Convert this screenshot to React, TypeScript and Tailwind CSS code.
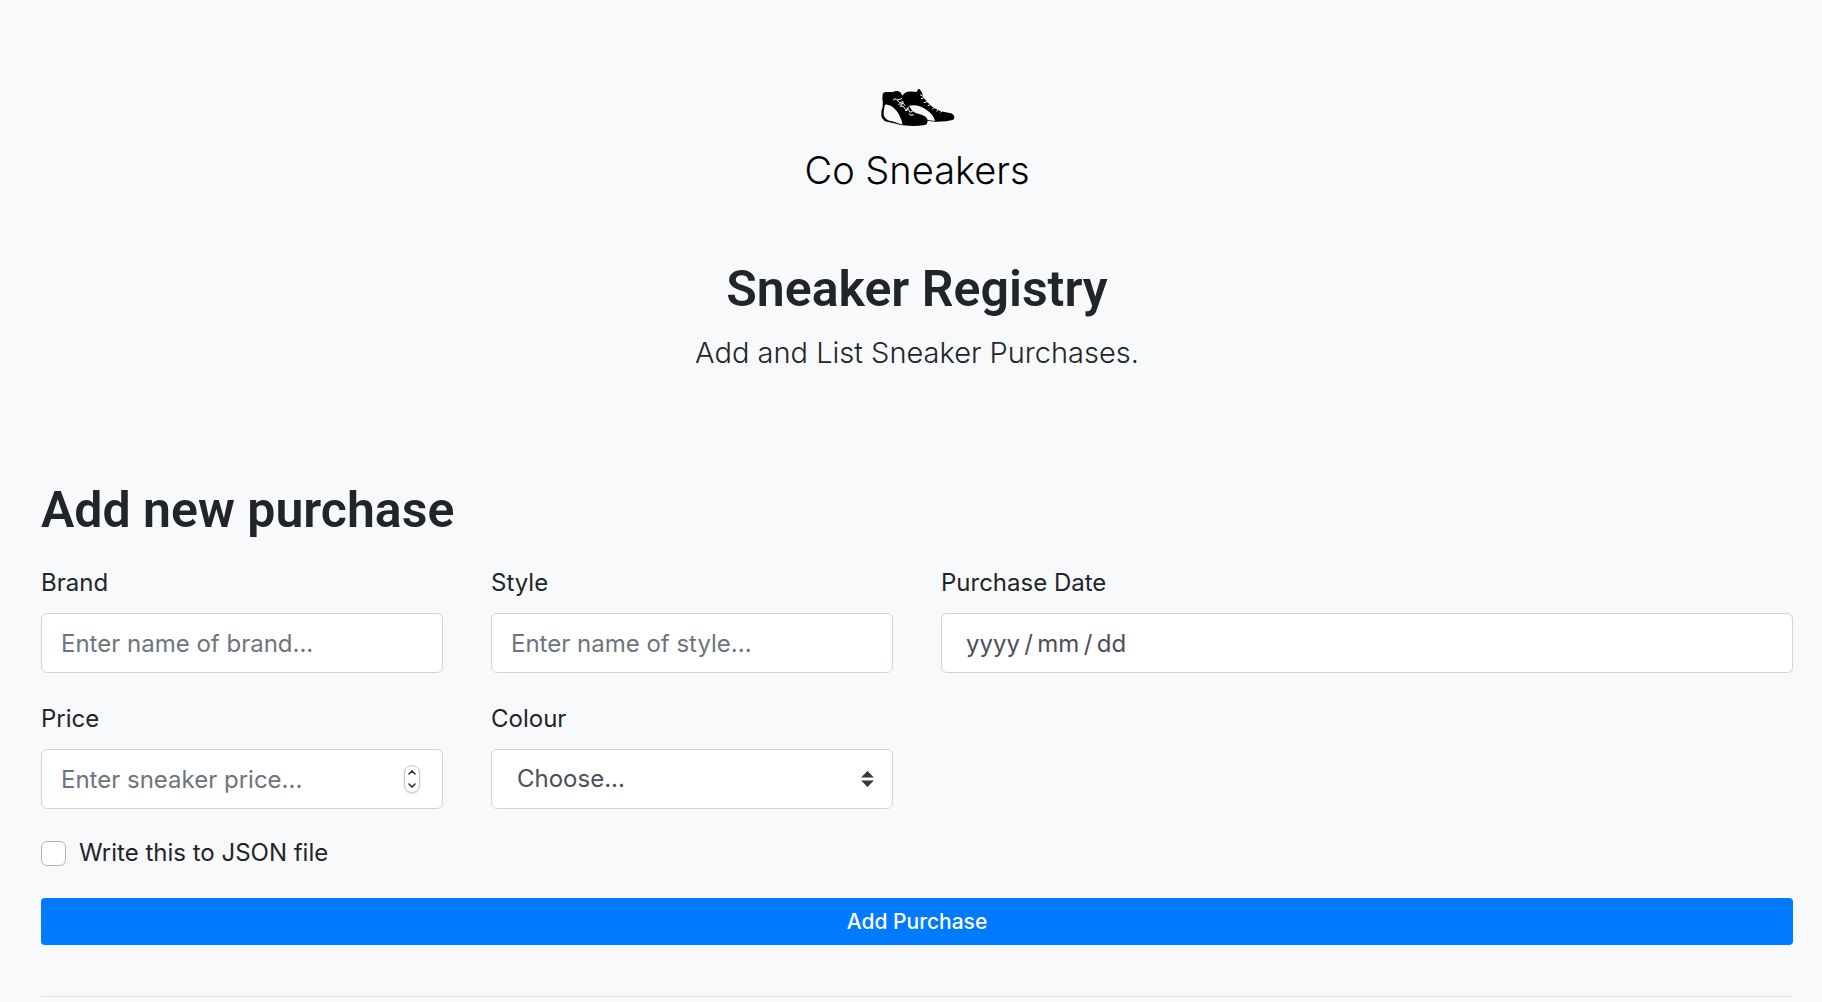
import { useState } from "react";

const control =
  "block h-[60px] w-full rounded-md border border-[#ced4da] bg-white px-[19px] text-2xl text-[#495057] placeholder:text-[#6c757d] placeholder:opacity-100 focus:border-[#80bdff] focus:outline-none";
const label = "mb-3 block text-2xl leading-9";

function SneakersLogo() {
  return (
    <svg viewBox="52 38 240 120" className="h-10 w-20" role="img" aria-label="Pair of sneakers">
      <path
        d="M126 64 Q134 51 144 49 Q158 47 171 50 L175 42 L180 41 L187 52 L191 66 L203 81 L218 94 L236 105 L251 109 L274 114 Q284 118 284 126 Q284 132 279 134 Q258 140 226 139 L203 136 L150 120 Z"
        fill="#000"
      />
      <path
        d="M69 56 Q71 51 77 50 L99 50 Q108 46 114 47 Q124 49 127 58 L136 78 L148 98 L161 114 L190 122 Q202 127 204 137 Q204 146 196 149 Q164 154 131 150 L104 143 L76 137 Q66 131 65 120 Q63 108 69 94 Q71 80 68 72 Z"
        fill="#000"
      />
      <path d="M76 88 Q88 86 100 96 Q117 110 126 136 Q128 144 128 148 L98 138 Q80 137 73 122 Q70 108 76 88 Z" fill="#f8f9fb" />
      <path d="M148 91 Q164 87 184 94 Q206 105 216 117 Q224 128 226 137 L204 134 Q201 124 188 119 L166 112 Q153 103 148 91 Z" fill="#f8f9fb" />
      <g fill="none" stroke="#f8f9fb" strokeWidth="3">
        <path d="M100 74 L109 70 L120 82 L131 78 M112 74 L127 70 M116 87 L131 84 L136 91 M120 93 L130 92 L138 103 L147 96 M136 106 L147 103 L151 111 L160 107 M147 115 L154 120 L163 118 M131 80 L123 92 M147 97 L139 107" />
        <path d="M181 58 L190 63 M184 70 L195 67 M193 82 L203 79 M204 91 L213 88 M218 101 L225 97 M230 108 L237 102 M242 111 L249 106" />
      </g>
      <path d="M74 136 L104 143 L128 149" stroke="#000" strokeWidth="2" fill="none" />
    </svg>
  );
}

function PriceField() {
  const [price, setPrice] = useState("");
  const step = (by: number) => setPrice(String(Math.max(0, Number(price) + by)));
  return (
    <div>
      <label htmlFor="price" className={label}>Price</label>
      <div className="relative">
        <input
          id="price"
          type="number"
          min="0"
          value={price}
          onChange={(e) => setPrice(e.target.value)}
          placeholder="Enter sneaker price..."
          className={`${control} [appearance:textfield]`}
        />
        <div className="absolute inset-y-0 right-[23px] flex items-center">
          <div className="flex h-7 w-4 flex-col overflow-hidden rounded-full border border-[#c8c8c8] bg-white text-[#333] shadow-sm">
            <button type="button" aria-label="Increase price" onClick={() => step(1)} className="flex flex-1 items-center justify-center">
              <svg viewBox="0 0 8 5" className="h-[5px] w-2" fill="none" stroke="currentColor" strokeWidth="1.6" strokeLinecap="round"><path d="M1 4 L4 1 L7 4" /></svg>
            </button>
            <button type="button" aria-label="Decrease price" onClick={() => step(-1)} className="flex flex-1 items-center justify-center">
              <svg viewBox="0 0 8 5" className="h-[5px] w-2" fill="none" stroke="currentColor" strokeWidth="1.6" strokeLinecap="round"><path d="M1 1 L4 4 L7 1" /></svg>
            </button>
          </div>
        </div>
      </div>
    </div>
  );
}

export default function App() {
  return (
    <div className="min-h-screen bg-[#f8f9fb] pr-[29px] pl-[41px] font-['Inter',sans-serif] text-[#212529]">
      <header className="flex flex-col items-center pt-[88px] text-center">
        <SneakersLogo />
        <p className="mt-[17px] text-[38px] leading-[50px] font-light text-black">Co Sneakers</p>
        <h1 className="mt-[62px] font-['Roboto',sans-serif] text-[50px] leading-[64px] font-semibold">Sneaker Registry</h1>
        <p className="mt-[9px] text-[29px] leading-[46px] font-light">Add and List Sneaker Purchases.</p>
      </header>

      <main className="mt-[102px]">
        <h2 className="font-['Roboto',sans-serif] text-[50px] leading-[64px] font-semibold">Add new purchase</h2>
        <form className="mt-[23px]" onSubmit={(e) => e.preventDefault()}>
          <div className="grid grid-cols-4 gap-x-12 gap-y-7">
            <div>
              <label htmlFor="brand" className={label}>Brand</label>
              <input id="brand" type="text" placeholder="Enter name of brand..." className={control} />
            </div>
            <div>
              <label htmlFor="style" className={label}>Style</label>
              <input id="style" type="text" placeholder="Enter name of style..." className={control} />
            </div>
            <div className="col-span-2">
              <label htmlFor="date" className={label}>Purchase Date</label>
              <input
                id="date"
                type="text"
                inputMode="numeric"
                placeholder={"yyyy\u2009/\u2009mm\u2009/\u2009dd"}
                className="block h-[60px] w-full rounded-md border border-[#ced4da] bg-white px-6 text-2xl text-[#495057] placeholder:text-[#495057] placeholder:opacity-100 focus:border-[#80bdff] focus:outline-none"
              />
            </div>
            <PriceField />
            <div>
              <label htmlFor="colour" className={label}>Colour</label>
              <div className="relative">
                <select
                  id="colour"
                  className="block h-[60px] w-full appearance-none rounded-md border border-[#ced4da] bg-white px-[25px] text-2xl text-[#495057] focus:border-[#80bdff] focus:outline-none"
                >
                  <option>Choose...</option>
                  <option>Black</option>
                  <option>White</option>
                  <option>Blue</option>
                  <option>Red</option>
                </select>
                <svg viewBox="0 0 4 5" className="pointer-events-none absolute inset-y-0 right-[19px] my-auto h-4 w-[13px]" fill="#343a40" aria-hidden="true">
                  <path d="M2 0 L0 2 h4z M2 5 L0 3 h4z" />
                </svg>
              </div>
            </div>
          </div>

          <div className="mt-[26px] flex items-center gap-[13px]">
            <input
              id="json"
              type="checkbox"
              className="size-[25px] appearance-none rounded-md border border-[#adb5bd] bg-white checked:border-[#007bff] checked:bg-[#007bff]"
            />
            <label htmlFor="json" className="text-2xl leading-9">Write this to JSON file</label>
          </div>

          <button type="submit" className="mt-[27px] block h-[47px] w-full rounded bg-[#007bff] text-[21px] font-medium text-white">
            Add Purchase
          </button>
        </form>
        <hr className="mt-[51px] border-[#dfe0e2]" />
      </main>
    </div>
  );
}
